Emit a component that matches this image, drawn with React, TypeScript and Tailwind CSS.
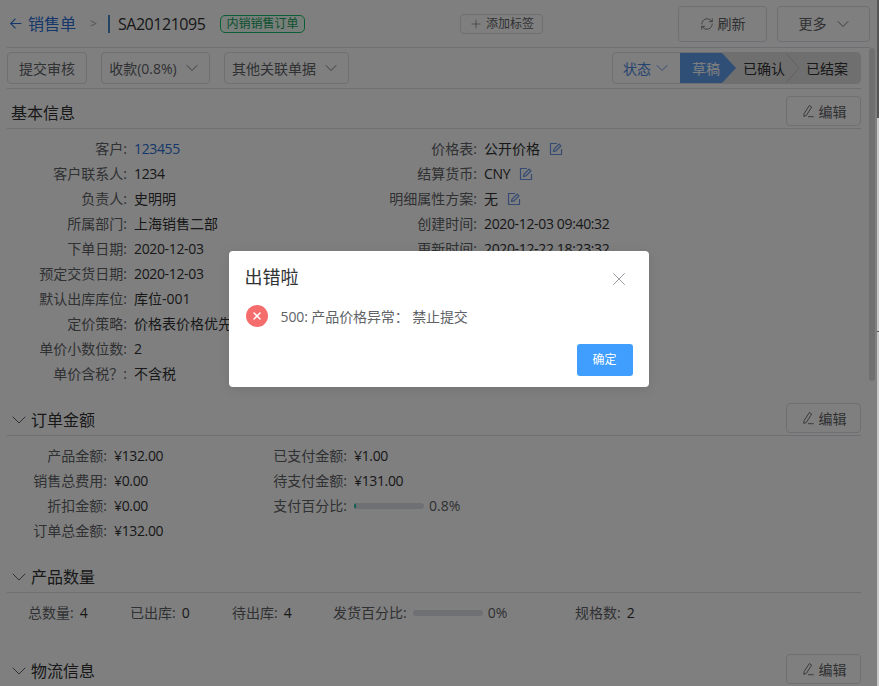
import { ChevronDown, Plus, RefreshCw, X } from "lucide-react";
import type { ReactNode } from "react";

const FONT = "font-['Open_Sans','Noto_Sans_CJK_SC',sans-serif]";

const PenIcon = () => (
  <svg viewBox="0 0 16 16" className="size-[14px]" fill="none" stroke="currentColor" strokeWidth="1">
    <path d="M9.5 1.8l2.7 1.6-6 9.6-3 1.2.3-3.2z" />
    <path d="M8 14.5h6.5" />
  </svg>
);

const EditLink = () => (
  <svg viewBox="0 0 14 14" className="ml-[9px] size-[14px] text-[#6a97e6]" fill="none" stroke="currentColor" strokeWidth="1.2">
    <path d="M12.5 7v5.5h-11v-11h6.5" />
    <path d="M4.5 9.5l.6-2.4 5-5 1.8 1.8-5 5z" />
  </svg>
);

const EditButton = () => (
  <button className="mb-[2px] flex h-[30px] w-[75px] items-center justify-center gap-1 rounded border border-[#dcdfe6] bg-white text-[14px] text-[#606266]">
    <PenIcon />
    编辑
  </button>
);

const Section = ({
  title,
  arrow,
  action,
  className,
}: {
  title: string;
  arrow?: boolean;
  action?: boolean;
  className: string;
}) => (
  <div className={`flex items-end justify-between border-b border-[#dcdfe6] ${className}`}>
    <div className={`flex h-[30px] items-center text-[16px] text-[#303133] ${arrow ? "" : "pl-[4px]"}`}>
      {arrow && <ChevronDown className="size-[24px] text-[#606266]" strokeWidth={1} />}
      {title}
    </div>
    {action && <EditButton />}
  </div>
);

const Row = ({ label, width, children }: { label: string; width: string; children: ReactNode }) => (
  <div className="flex h-[25px] items-center text-[14px]">
    <span className={`text-right text-[#606266] ${width}`}>{label}:</span>
    <span className="ml-[7px] flex items-center whitespace-nowrap text-[#303133]">{children}</span>
  </div>
);

// latin and digits run narrower than the stack's default
const Num = ({ children, className = "" }: { children: ReactNode; className?: string }) => (
  <span className={`tracking-[-0.35px] ${className}`}>{children}</span>
);

const Progress = ({ percent, width, text }: { percent: number; width: string; text: string }) => (
  <span className="flex items-center text-[#606266]">
    <span className={`h-[6px] overflow-hidden rounded-full bg-[#dfe1e8] ${width}`}>
      <span
        className="block h-full rounded-full bg-[#20c0a8]"
        style={{ width: `${percent}%`, minWidth: percent > 0 ? 2 : 0 }}
      />
    </span>
    <span className="ml-[5px]">{text}</span>
  </span>
);

const Stat = ({ label, value, className }: { label: string; value: ReactNode; className: string }) => (
  <div className={`flex items-center whitespace-nowrap ${className}`}>
    <span className="text-[#606266]">{label}:</span>
    <span className="ml-[6px] text-[#303133]">{value}</span>
  </div>
);

const basicLeft: [string, ReactNode][] = [
  ["客户", <Num className="text-[#2a6fd6]">123455</Num>],
  ["客户联系人", <Num>1234</Num>],
  ["负责人", "史明明"],
  ["所属部门", "上海销售二部"],
  ["下单日期", <Num>2020-12-03</Num>],
  ["预定交货日期", <Num>2020-12-03</Num>],
  ["默认出库库位", "库位-001"],
  ["定价策略", "价格表价格优先"],
  ["单价小数位数", <Num>2</Num>],
  ["单价含税？", "不含税"],
];

const basicRight: [string, ReactNode, boolean][] = [
  ["价格表", "公开价格", true],
  ["结算货币", <Num>CNY</Num>, true],
  ["明细属性方案", "无", true],
  ["创建时间", <Num>2020-12-03 09:40:32</Num>, false],
  ["更新时间", <Num>2020-12-22 18:23:32</Num>, false],
];

export default function App() {
  return (
    <div className={`relative h-[686px] w-[879px] overflow-hidden bg-white ${FONT}`}>
      <div className="w-[861px] pl-[7px]">
        {/* header */}
        <div className="mr-[-9px] flex h-[48px] items-center border-b border-[#dcdfe6] whitespace-nowrap">
          <div className="flex w-[453px] items-center">
            <span className="flex items-center gap-[6px] pl-[2px] text-[16px] text-[#2a6fd6]">
              <svg viewBox="0 0 12 12" className="size-[13px]" fill="none" stroke="currentColor" strokeWidth="1">
                <path d="M6 1.5L1.5 6 6 10.5M1.5 6H11.5" />
              </svg>
              销售单
            </span>
            <span className="ml-[14px] text-[12px] text-[#a8a8a8]">&gt;</span>
            <span className="ml-[11px] h-[18px] w-[2px] bg-[#4a86c5]" />
            <span className="ml-[8px] text-[16px] tracking-[-0.45px] text-[#303133]">SA20121095</span>
            <span className="ml-[15px] rounded-[5px] border border-[#19be6b] bg-[#f0fff5] px-[5px] text-[12px] leading-[16px] text-[#19a15f]">
              内销销售订单
            </span>
          </div>
          <button className="flex h-[20px] w-[83px] items-center justify-center gap-[3px] rounded border border-[#dcdfe6] text-[12px] text-[#606266]">
            <Plus className="size-[14px]" strokeWidth={1} />
            添加标签
          </button>
          <button className="ml-[135px] flex h-[36px] w-[89px] items-center justify-center gap-[4px] rounded border border-[#dcdfe6] text-[14px] text-[#606266]">
            <RefreshCw className="size-[14px]" strokeWidth={1.3} />
            刷新
          </button>
          <button className="ml-[10px] flex h-[36px] w-[93px] items-center justify-center gap-[6px] rounded border border-[#dcdfe6] pl-[4px] text-[14px] text-[#606266]">
            更多
            <ChevronDown className="size-[20px]" strokeWidth={1} />
          </button>
        </div>

        {/* toolbar */}
        <div className="flex h-[41px] items-center justify-between border-b border-[#dcdfe6] whitespace-nowrap">
          <div className="flex items-center text-[14px] text-[#606266]">
            <button className="h-[32px] w-[80px] rounded border border-[#dcdfe6]">提交审核</button>
            <button className="ml-[14px] flex h-[32px] w-[109px] items-center justify-center gap-[5px] rounded border border-[#dcdfe6]">
              收款(0.8%)
              <ChevronDown className="size-[20px]" strokeWidth={1} />
            </button>
            <button className="ml-[14px] flex h-[32px] w-[125px] items-center justify-center gap-[5px] rounded border border-[#dcdfe6]">
              其他关联单据
              <ChevronDown className="size-[20px]" strokeWidth={1} />
            </button>
          </div>
          <div className="flex h-[32px] w-[249px] items-center overflow-hidden rounded border border-[#dcdfe6] text-[14px]">
            <span className="flex h-full w-[67px] items-center justify-center gap-[1px] pl-[2px] text-[#4a86e0]">
              状态
              <ChevronDown className="size-[20px]" strokeWidth={1} />
            </span>
            <span className="flex h-full flex-1 bg-[#dedede] text-[#303133]">
              <span className="flex h-full w-[56px] items-center bg-[#609fef] pl-[12px] text-white [clip-path:polygon(0_0,75%_0,100%_50%,75%_100%,0_100%)]">
                草稿
              </span>
              <span className="ml-[7px] flex h-full items-center">已确认</span>
              <svg viewBox="0 0 15 32" className="h-full w-[15px] text-[#c4c4c4]" fill="none" stroke="currentColor">
                <path d="M0.5 0l14 16-14 16" />
              </svg>
              <span className="ml-[6px] flex h-full items-center">已结案</span>
            </span>
          </div>
        </div>

        {/* 基本信息 */}
        <Section title="基本信息" action className="h-[40px]" />
        <div className="mt-[7px] flex h-[258px]">
          <div className="w-[350px]">
            {basicLeft.map(([label, value]) => (
              <Row key={label} label={label} width="w-[120px]">
                {value}
              </Row>
            ))}
          </div>
          <div>
            {basicRight.map(([label, value, editable]) => (
              <Row key={label} label={label} width="w-[120px]">
                {value}
                {editable && <EditLink />}
              </Row>
            ))}
          </div>
        </div>

        {/* 订单金额 */}
        <Section title="订单金额" arrow action className="h-[42px]" />
        <div className="mt-[7px] flex h-[120px]">
          <div className="w-[240px]">
            <Row label="产品金额" width="w-[100px]"><Num>¥132.00</Num></Row>
            <Row label="销售总费用" width="w-[100px]"><Num>¥0.00</Num></Row>
            <Row label="折扣金额" width="w-[100px]"><Num>¥0.00</Num></Row>
            <Row label="订单总金额" width="w-[100px]"><Num>¥132.00</Num></Row>
          </div>
          <div>
            <Row label="已支付金额" width="w-[100px]"><Num>¥1.00</Num></Row>
            <Row label="待支付金额" width="w-[100px]"><Num>¥131.00</Num></Row>
            <Row label="支付百分比" width="w-[100px]">
              <Progress percent={0.8} width="w-[70px]" text="0.8%" />
            </Row>
          </div>
        </div>

        {/* 产品数量 */}
        <Section title="产品数量" arrow className="h-[30px]" />
        <div className="mt-[7px] flex h-[47px] items-start pl-[21px] text-[14px] leading-[25px]">
          <Stat label="总数量" value="4" className="w-[102px]" />
          <Stat label="已出库" value="0" className="w-[102px]" />
          <Stat label="待出库" value="4" className="w-[101px]" />
          <Stat
            label="发货百分比"
            value={<Progress percent={0} width="w-[70px]" text="0%" />}
            className="w-[242px]"
          />
          <Stat label="规格数" value="2" className="w-[60px]" />
        </div>

        {/* 物流信息 */}
        <Section title="物流信息" arrow action className="h-[40px]" />
      </div>

      {/* scrollbar */}
      <div className="absolute top-[48px] right-[4px] h-[333px] w-[6px] rounded-full bg-[#e0e0e0]" />

      {/* mask + dialog */}
      <div className="absolute inset-0 flex items-start justify-center bg-black/50">
        <div className="mt-[251px] ml-[-2px] h-[136px] w-[420px] rounded bg-white px-[16px] pt-[14px] shadow-[0_2px_12px_rgba(0,0,0,0.1)]">
          <div className="flex items-center justify-between text-[18px] leading-[24px] text-[#303133]">
            出错啦
            <X className="relative top-[2px] mr-[3px] size-[22px] text-[#909399]" strokeWidth={1} />
          </div>
          <div className="mt-[16px] flex items-center gap-[2px] pl-[1px] text-[14px] text-[#606266]">
            <span className="mr-[11px] flex size-[22px] items-center justify-center rounded-full bg-[#f56c6c] text-white">
              <X className="size-[12px]" strokeWidth={3} />
            </span>
            <span className="tracking-[-0.1px]">500: 产品价格异常： 禁止提交</span>
          </div>
          <div className="mt-[17px] flex justify-end">
            <button className="h-[32px] w-[56px] rounded-[3px] bg-[#409eff] text-[12px] text-white">确定</button>
          </div>
        </div>
      </div>

      {/* window edge, sits outside the mask's tone */}
      <div className="absolute top-0 right-0 h-[118px] w-[2px] bg-[#555555]" />
      <div className="absolute top-[118px] right-0 h-[568px] w-[2px] bg-[#c8c8c8]" />
      <div className="absolute top-[331px] right-0 h-px w-[2px] bg-[#555555]" />
    </div>
  );
}
